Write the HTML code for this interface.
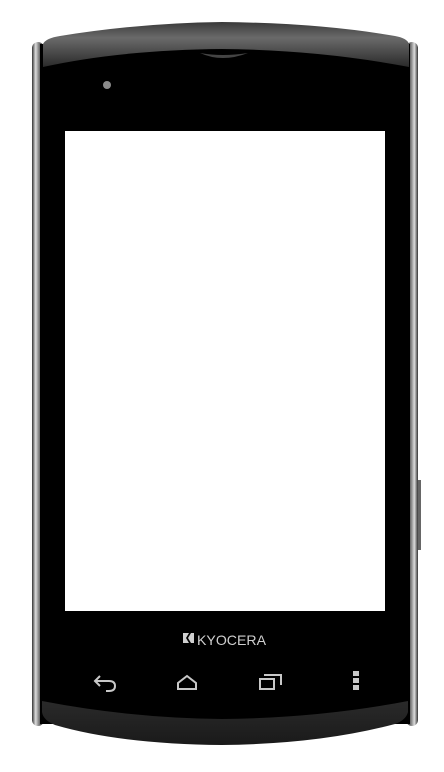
<!DOCTYPE html>
<html><head><style>
html,body{margin:0;padding:0;background:#fff;width:444px;height:772px;overflow:hidden}
</style></head><body>
<svg width="444" height="772" viewBox="0 0 444 772" xmlns="http://www.w3.org/2000/svg">
<defs>
<linearGradient id="side" x1="0" x2="1">
<stop offset="0" stop-color="#333"/><stop offset="0.3" stop-color="#ddd"/><stop offset="0.6" stop-color="#777"/><stop offset="1" stop-color="#222"/>
</linearGradient>
<linearGradient id="side2" x1="0" x2="1">
<stop offset="0" stop-color="#222"/><stop offset="0.4" stop-color="#777"/><stop offset="0.7" stop-color="#ddd"/><stop offset="1" stop-color="#333"/>
</linearGradient>
<linearGradient id="cap" x1="0" y1="0" x2="0" y2="1">
<stop offset="0" stop-color="#3a3a3a"/><stop offset="0.35" stop-color="#6a6a6a"/><stop offset="1" stop-color="#2a2a2a"/>
</linearGradient>
<linearGradient id="bcap" x1="0" y1="0" x2="0" y2="1">
<stop offset="0" stop-color="#2a2a2a"/><stop offset="1" stop-color="#1a1a1a"/>
</linearGradient>
</defs>
<rect x="32" y="42" width="12" height="684" rx="6" fill="url(#side)"/>
<rect x="406" y="42" width="12" height="684" rx="6" fill="url(#side2)"/>
<rect x="418" y="480" width="3" height="70" fill="#666"/>
<rect x="40" y="44" width="370" height="680" fill="#000"/>
<path d="M43,44 Q46,38 60,36 Q140,23 222,22 Q320,23 395,36 Q407,38 409,44 L409,67 Q320,50 222,49 Q120,50 43,67 Z" fill="url(#cap)"/>
<path d="M200,53 Q222,63 248,53 Q222,57 200,53 Z" fill="#444"/>
<circle cx="107" cy="85" r="4" fill="#8a8a8a"/>
<rect x="65" y="131" width="320" height="480" fill="#fff"/>
<path d="M183,633 l6,0 l-3,5 l3,5 l-6,0 z M191,633 l-3,5 l3,5 l3,0 l0,-10 z" fill="#cfcfcf"/>
<text x="197" y="645" font-family="Liberation Sans, sans-serif" font-size="14" fill="#cfcfcf" textLength="69" lengthAdjust="spacingAndGlyphs">KYOCERA</text>
<g fill="none" stroke="#c8c8c8" stroke-width="2">
<path d="M100,676 l-5,5 l5,5 M95,681 h14 q6,0 6,5 q0,5 -6,5 h-3"/>
<path d="M178,689 v-6 l9,-7 l9,7 v6 z"/>
<path d="M260,679 h14 v10 h-14 z M264,675 h17 v10"/>
</g>
<g fill="#c8c8c8">
<rect x="353" y="671" width="6" height="5"/>
<rect x="353" y="678" width="6" height="5"/>
<rect x="353" y="685" width="6" height="5"/>
</g>
<path d="M42,701 Q130,718 222,719 Q320,718 408,701 L408,712 Q406,720 395,724 Q320,744 222,745 Q120,744 55,725 Q43,720 42,712 Z" fill="url(#bcap)"/>
</svg>
</body></html>
